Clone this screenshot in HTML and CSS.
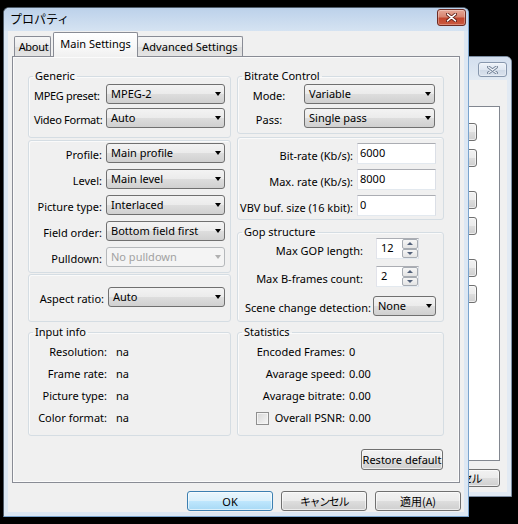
FILE: index.html
```html
<!DOCTYPE html>
<html lang="ja">
<head>
  <meta charset="UTF-8" />
  <title>プロパティ</title>
  <link rel="stylesheet" href="styles.css">
</head>
<body>
  <div class="desktop">

    <!-- Window behind the dialog -->
    <div class="window back-window">
      <div class="titlebar">
        <span class="title"></span>
        <span class="close-btn inactive">
          <svg width="11" height="8" viewBox="0 0 11 8">
            <path d="M1.5 1 L9.5 7 M9.5 1 L1.5 7" stroke="#6f7f95" stroke-width="3" stroke-linecap="round"/>
            <path d="M1.5 1 L9.5 7 M9.5 1 L1.5 7" stroke="#eef2f7" stroke-width="1.4" stroke-linecap="round"/>
          </svg>
        </span>
      </div>
      <div class="client back-client">
        <div class="back-panel">
          <div class="back-buttons">
            <div class="pair"><span class="btn small"></span><span class="btn small"></span></div>
            <div class="pair"><span class="btn small"></span><span class="btn small"></span></div>
            <div class="pair"><span class="btn small"></span><span class="btn small"></span></div>
          </div>
        </div>
        <div class="back-row">
          <button class="btn wide short">OK</button>
          <button class="btn wide short jp cancel back-cancel">キャンセル</button>
        </div>
      </div>
    </div>

    <!-- Property dialog -->
    <div class="window main-window">
      <div class="titlebar">
        <span class="title">プロパティ</span>
        <span class="close-btn">
          <svg width="11" height="9" viewBox="0 0 11 9">
            <path d="M1.5 1.2 L9.5 7.8 M9.5 1.2 L1.5 7.8" stroke="#5a1a12" stroke-width="3.2" stroke-linecap="round"/>
            <path d="M1.5 1.2 L9.5 7.8 M9.5 1.2 L1.5 7.8" stroke="#fff" stroke-width="1.6" stroke-linecap="round"/>
          </svg>
        </span>
      </div>

      <div class="client main-client">
        <div class="tabs">
          <div class="tab tab-about">About</div>
          <div class="tab tab-main">Main Settings</div>
          <div class="tab tab-adv">Advanced Settings</div>
        </div>

        <div class="page">
          <div class="columns">
            <!-- Left column -->
            <div class="col">
              <fieldset class="group generic">
                <legend>Generic</legend>
                <div class="row">
                  <span class="lbl">MPEG preset:</span>
                  <div class="combo">MPEG-2</div>
                </div>
                <div class="row">
                  <span class="lbl">Video Format:</span>
                  <div class="combo">Auto</div>
                </div>
              </fieldset>

              <div class="box video">
                <div class="row">
                  <span class="lbl">Profile:</span>
                  <div class="combo">Main profile</div>
                </div>
                <div class="row">
                  <span class="lbl">Level:</span>
                  <div class="combo">Main level</div>
                </div>
                <div class="row">
                  <span class="lbl">Picture type:</span>
                  <div class="combo">Interlaced</div>
                </div>
                <div class="row">
                  <span class="lbl">Field order:</span>
                  <div class="combo">Bottom field first</div>
                </div>
                <div class="row">
                  <span class="lbl">Pulldown:</span>
                  <div class="combo disabled">No pulldown</div>
                </div>
              </div>

              <div class="box aspect">
                <div class="row">
                  <span class="lbl">Aspect ratio:</span>
                  <div class="combo">Auto</div>
                </div>
              </div>

              <fieldset class="group info input-info">
                <legend>Input info</legend>
                <span class="lbl">Resolution:</span><span>na</span>
                <span class="lbl">Frame rate:</span><span>na</span>
                <span class="lbl">Picture type:</span><span>na</span>
                <span class="lbl">Color format:</span><span>na</span>
              </fieldset>
            </div>

            <!-- Right column -->
            <div class="col">
              <fieldset class="group bitrate">
                <legend>Bitrate Control</legend>
                <div class="row">
                  <span class="lbl">Mode:</span>
                  <div class="combo">Variable</div>
                </div>
                <div class="row">
                  <span class="lbl">Pass:</span>
                  <div class="combo">Single pass</div>
                </div>
              </fieldset>

              <div class="box rates">
                <div class="row">
                  <span class="lbl">Bit-rate (Kb/s):</span>
                  <div class="textbox">6000</div>
                </div>
                <div class="row">
                  <span class="lbl">Max. rate (Kb/s):</span>
                  <div class="textbox">8000</div>
                </div>
                <div class="row">
                  <span class="lbl">VBV buf. size (16 kbit):</span>
                  <div class="textbox">0</div>
                </div>
              </div>

              <fieldset class="group gop">
                <legend>Gop structure</legend>
                <div class="row">
                  <span class="lbl">Max GOP length:</span>
                  <div class="spin">
                    <span class="spin-value">12</span>
                    <span class="spin-btns"><span class="spin-btn up"></span><span class="spin-btn down"></span></span>
                  </div>
                </div>
                <div class="row">
                  <span class="lbl">Max B-frames count:</span>
                  <div class="spin">
                    <span class="spin-value">2</span>
                    <span class="spin-btns"><span class="spin-btn up"></span><span class="spin-btn down"></span></span>
                  </div>
                </div>
                <div class="row scene">
                  <span class="lbl">Scene change detection:</span>
                  <div class="combo">None</div>
                </div>
              </fieldset>

              <fieldset class="group info stats">
                <legend>Statistics</legend>
                <span class="lbl">Encoded Frames:</span><span>0</span>
                <span class="lbl">Avarage speed:</span><span>0.00</span>
                <span class="lbl">Avarage bitrate:</span><span>0.00</span>
                <span class="lbl check-lbl"><span class="checkbox"></span>Overall PSNR:</span><span>0.00</span>
              </fieldset>
            </div>
          </div>

          <div class="page-foot">
            <button class="btn restore">Restore default</button>
          </div>
        </div>

        <div class="dialog-buttons">
          <button class="btn wide default">OK</button>
          <button class="btn wide jp cancel">キャンセル</button>
          <button class="btn wide jp">適用(A)</button>
        </div>
      </div>
    </div>

  </div>
</body>
</html>
```

FILE: styles.css
```css
* {
  box-sizing: border-box;
}
body {
  margin: 0;
  background: #000;
  font-family: "Noto Sans", "Noto Sans CJK JP", sans-serif;
  font-size: 11px;
  line-height: 16px;
  color: #000;
}
.desktop {
  position: relative;
  width: 518px;
  height: 524px;
  overflow: hidden;
}

/* Windows */
.window {
  position: absolute;
  display: flex;
  flex-direction: column;
  border: 1px solid #4e5b69;
  border-right-color: #79a3cd;
  border-bottom-color: #79a3cd;
  border-radius: 6px 6px 0 0;
  background: #dce7f3;
}
.main-window {
  left: 3px;
  top: 7px;
  width: 466px;
  height: 510px;
}
.back-window {
  left: 300px;
  top: 56px;
  width: 212px;
  height: 441px;
  border-color: #7d8ea3;
  background: #e2eaf3;
}
.titlebar {
  display: flex;
  align-items: flex-start;
  justify-content: space-between;
  height: 23px;
  padding: 0 2px 0 6px;
  border-radius: 5px 5px 0 0;
  background: linear-gradient(#bcd1ea, #d5e3f2);
}
.back-window .titlebar {
  padding-right: 4px;
  background: linear-gradient(#d3dfee, #e2eaf3);
}
.title {
  font-family: "Noto Sans CJK JP", sans-serif;
  font-size: 12px;
  line-height: 21px;
}
.close-btn {
  display: flex;
  align-items: center;
  justify-content: center;
  width: 29px;
  height: 17px;
  margin-top: 1px;
  border: 1px solid #6e2b22;
  border-radius: 3px;
  background: linear-gradient(#e6a796, #d78571 45%, #c2472f 55%, #cb5a40);
  box-shadow: inset 0 0 0 1px rgba(255, 255, 255, 0.3);
}
.close-btn.inactive {
  height: 15px;
  margin-top: 5px;
  border-color: #8797ad;
  background: linear-gradient(#eef3f9, #dfe7f1 50%, #d0dae7 55%, #dae3ee);
}

/* Client areas */
.client {
  flex: 1;
  display: flex;
  flex-direction: column;
  margin: 0 4px 4px;
  background: #f0f0f0;
}
.main-client {
  padding: 1px 4px 0;
}
.back-client {
  padding: 26px 7px 5px;
}

/* Tabs */
.tabs {
  display: flex;
  align-items: flex-end;
  height: 24px;
  padding-left: 2px;
}
.tab {
  height: 20px;
  padding-top: 2px;
  border: 1px solid #898c95;
  border-bottom: 0;
  border-radius: 2px 2px 0 0;
  background: linear-gradient(#f6f6f6, #ebebeb 50%, #dedede 55%, #e3e3e3);
  text-align: center;
  white-space: nowrap;
}
.tab-about {
  width: 37px;
  padding-left: 2px;
  letter-spacing: -0.3px;
}
.tab-main {
  position: relative;
  z-index: 1;
  width: 85px;
  height: 25px;
  margin: 0 -1px -1px 2px;
  padding-top: 3px;
  background: linear-gradient(#fff, #f6f6f6 70%, #f0f0f0);
}
.tab-adv {
  width: 106px;
}

/* Tab page */
.page {
  height: 427px;
  padding: 11px 15px 0;
  border: 1px solid #898c95;
  background: #f0f0f0;
  box-shadow: inset 0 0 0 1px #fbfbfb;
}
.columns {
  display: grid;
  grid-template-columns: 203px 207px;
  column-gap: 6px;
}
.col {
  display: flex;
  flex-direction: column;
}

/* Group boxes */
.group, .box {
  margin: 0;
  padding: 0;
  border: 1px solid #d5dde3;
  border-radius: 3px;
  box-shadow: inset 1px 1px 0 #fafafa;
}
.group legend {
  margin-left: 4px;
  padding: 0 2px;
  line-height: 16px;
}

.row {
  display: grid;
  align-items: end;
  column-gap: 4px;
}
.lbl {
  white-space: nowrap;
  text-align: right;
}

.generic {
  padding-bottom: 9px;
}
.generic .row,
.video .row {
  grid-template-columns: 73px 119px;
}
.generic .lbl {
  padding-left: 5px;
  letter-spacing: -0.3px;
  text-align: left;
}
.generic .row + .row {
  margin-top: 4px;
}
.video {
  margin-top: 2px;
  padding: 2px 0 5px;
}
.video .row + .row {
  margin-top: 6px;
}
.aspect {
  margin-top: 1px;
  padding: 12px 0 14px;
}
.aspect .row {
  grid-template-columns: 75px 117px;
}

.info {
  display: grid;
  align-content: start;
  margin-top: 2px;
  padding: 1px 0 6px;
  line-height: 22px;
}
.input-info {
  grid-template-columns: 78px auto;
  column-gap: 9px;
}
.stats {
  grid-template-columns: 107px auto;
  column-gap: 4px;
}
.check-lbl {
  display: flex;
  align-items: center;
  justify-content: space-between;
  padding-left: 18px;
}
.checkbox {
  width: 13px;
  height: 13px;
  border: 1px solid #8f8f8f;
  background: linear-gradient(135deg, #d6d6d6, #f6f6f6);
  box-shadow: inset 0 0 0 1px #f4f4f4;
}

.bitrate {
  padding-bottom: 5px;
}
.bitrate .row {
  grid-template-columns: 62px 131px;
}
.bitrate .lbl {
  text-align: center;
}
.bitrate .row + .row {
  margin-top: 4px;
}
.rates {
  margin-top: 3px;
  padding: 5px 0 3px;
}
.rates .row {
  grid-template-columns: 115px 79px;
}
.rates .row + .row {
  margin-top: 5px;
}
.gop {
  margin-top: 4px;
  padding-bottom: 5px;
}
.gop .row {
  grid-template-columns: 125px 43px;
  column-gap: 13px;
}
.gop .row:first-of-type {
  margin-top: -2px;
}
.gop .row + .row {
  margin-top: 7px;
}
.gop .row.scene {
  grid-template-columns: 131px 63px;
  column-gap: 4px;
  margin-top: 9px;
}
.gop .scene .lbl {
  padding-left: 7px;
  text-align: left;
}
.stats {
  margin-top: 2px;
}

/* Controls */
.combo {
  display: flex;
  align-items: center;
  justify-content: space-between;
  height: 20px;
  padding: 0 3px 0 4px;
  border: 1px solid #707070;
  border-radius: 3px;
  background: linear-gradient(#f3f3f3, #ebebeb 50%, #dddddd 52%, #d0d0d0);
  white-space: nowrap;
}
.combo::after {
  content: "";
  border-left: 3.5px solid transparent;
  border-right: 3.5px solid transparent;
  border-top: 4px solid #000;
}
.combo.disabled {
  border-color: #b5b8bb;
  background: #f4f4f4;
  color: #a2a2a2;
}
.combo.disabled::after {
  border-top-color: #b0b0b0;
}
.textbox {
  height: 21px;
  padding: 0 2px;
  border: 1px solid #abadb3;
  border-color: #abadb3 #dbdfe6 #e3e9ef #e2e3ea;
  background: #fff;
  line-height: 18px;
}
.spin {
  display: flex;
  height: 21px;
  border: 1px solid #abadb3;
  border-color: #abadb3 #dbdfe6 #e3e9ef #e2e3ea;
  background: #fff;
}
.spin-value {
  flex: 1;
  padding-left: 4px;
  line-height: 17px;
}
.spin-btns {
  display: flex;
  flex-direction: column;
  width: 16px;
}
.spin-btn {
  display: flex;
  flex: 1;
  align-items: center;
  justify-content: center;
  border: 1px solid #a7acb3;
  border-radius: 2px;
  background: linear-gradient(#f6f6f6, #e4e4e4);
}
.spin-btn.up::after {
  content: "";
  border-left: 3px solid transparent;
  border-right: 3px solid transparent;
  border-bottom: 3px solid #52617a;
}
.spin-btn.down::after {
  content: "";
  border-left: 3px solid transparent;
  border-right: 3px solid transparent;
  border-top: 3px solid #52617a;
}

/* Buttons */
.btn {
  display: block;
  height: 20px;
  padding: 0;
  border: 1px solid #707070;
  border-radius: 3px;
  background: linear-gradient(#f2f2f2, #ebebeb 50%, #dddddd 52%, #cfcfcf);
  box-shadow: inset 0 0 0 1px rgba(255, 255, 255, 0.6);
  font: inherit;
  line-height: 17px;
  color: #000;
  text-align: center;
  white-space: nowrap;
}
.btn.jp {
  font-family: "Noto Sans CJK JP", sans-serif;
}
.btn.cancel {
  letter-spacing: -1.4px;
}
.btn.back-cancel {
  padding-right: 18px;
  text-align: right;
}
.btn.wide {
  width: 86px;
}
.btn.default {
  border-color: #3c7fb1;
  background: linear-gradient(#eaf6fd, #d9f0fc 50%, #bee6fd 52%, #a7d9f5);
}
.btn.restore {
  width: 82px;
  height: 21px;
  margin-right: 1px;
}
.page-foot {
  display: flex;
  justify-content: flex-end;
  margin-top: 13px;
}
.dialog-buttons {
  display: flex;
  justify-content: flex-end;
  gap: 8px;
  margin: 8px -1px 0 0;
}

/* Back window contents */
.back-panel {
  display: flex;
  justify-content: flex-end;
  height: 355px;
  padding: 16px 22px 0 0;
  border: 1px solid #828790;
  background: #fff;
}
.back-buttons {
  display: flex;
  flex-direction: column;
  gap: 24px;
  width: 60px;
}
.pair {
  display: flex;
  flex-direction: column;
  gap: 8px;
}
.btn.small {
  height: 18px;
}
.back-row {
  display: flex;
  justify-content: flex-end;
  gap: 8px;
  margin-top: 8px;
}
.btn.short {
  height: 18px;
  line-height: 15px;
}
```
